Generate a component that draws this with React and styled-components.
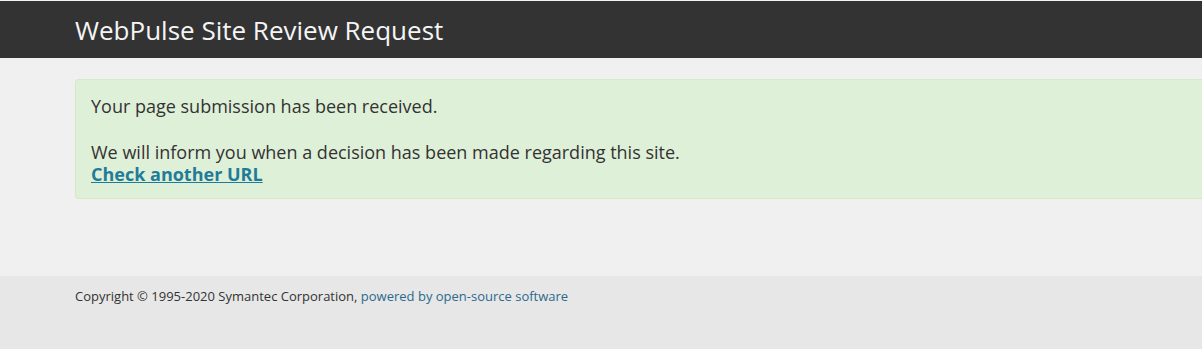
import React from "react";
import styled, { createGlobalStyle } from "styled-components";

const Global = createGlobalStyle`
  html, body { margin: 0; padding: 0; }
  body {
    background: #f0f0f0;
    font-family: "Open Sans", "Noto Sans", sans-serif;
    color: #333;
    overflow: hidden;
  }
`;

const Page = styled.div`
  width: 1202px;
  height: 349px;
  display: flex;
  flex-direction: column;
  border-top: 1px solid #f4f4f4;
  box-sizing: border-box;
`;

const Header = styled.header`
  background: #333333;
  height: 57px;
  display: flex;
  align-items: center;
  padding-left: 75px;
`;

const Title = styled.h1`
  margin: 0;
  font-size: 26px;
  font-weight: 400;
  color: #f5f5f5;
`;

const Main = styled.main`
  flex: 1;
  padding: 21px 0 0 75px;
`;

const Alert = styled.div`
  background: #dff0d8;
  border: 1px solid #d6e9c6;
  border-right: none;
  border-radius: 4px 0 0 4px;
  padding: 15px 15px 13px 15px;
  color: #333;
  font-size: 18px;
  line-height: 22px;
`;

const Para = styled.p`
  margin: 0 0 ${(p) => p.$gap || 0}px 0;
`;

const StrongLink = styled.a`
  color: #1f7c99;
  font-weight: 700;
  text-decoration: underline;
`;

const Footer = styled.footer`
  background: #e7e7e7;
  height: 73px;
  padding: 11px 0 0 75px;
  box-sizing: border-box;
  font-size: 13px;
  color: #333;
`;

const FooterLink = styled.a`
  color: #2a6a8c;
  text-decoration: none;
`;

export default function App() {
  return (
    <>
      <Global />
      <Page>
        <Header>
          <Title>WebPulse Site Review Request</Title>
        </Header>
        <Main>
          <Alert>
            <Para $gap={24}>Your page submission has been received.</Para>
            <Para>We will inform you when a decision has been made regarding this site.</Para>
            <StrongLink href="#">Check another URL</StrongLink>
          </Alert>
        </Main>
        <Footer>
          Copyright © 1995-2020 Symantec Corporation,{" "}
          <FooterLink href="#">powered by open-source software</FooterLink>
        </Footer>
      </Page>
    </>
  );
}
